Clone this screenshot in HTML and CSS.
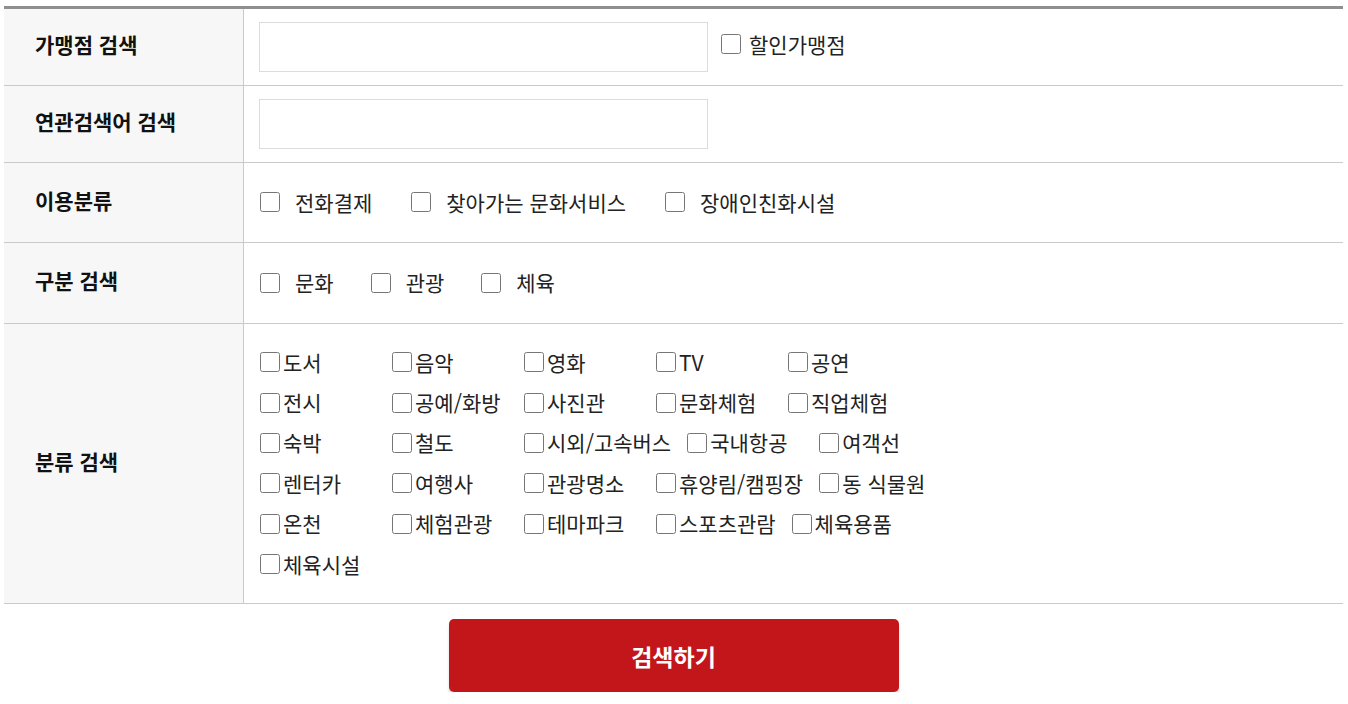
FILE: index.html
```html
<!DOCTYPE html>
<html lang="ko">
<head>
    <meta charset="UTF-8">
    <meta name="viewport" content="width=device-width, initial-scale=1.0">
    <title>가맹점 검색</title>
    <link rel="stylesheet" href="styles.css">
</head>
<body>

<div class="search-form">
    <div class="row">
        <div class="label">가맹점 검색</div>
        <div class="field field-input">
            <input type="text" class="text-input" />
            <label class="check check-inline"><input type="checkbox" />할인가맹점</label>
        </div>
    </div>
    <div class="row">
        <div class="label">연관검색어 검색</div>
        <div class="field field-input">
            <input type="text" class="text-input" />
        </div>
    </div>
    <div class="row">
        <div class="label">이용분류</div>
        <div class="field field-checks row-use">
            <label class="check"><input type="checkbox" />전화결제</label>
            <label class="check"><input type="checkbox" />찾아가는 문화서비스</label>
            <label class="check"><input type="checkbox" />장애인친화시설</label>
        </div>
    </div>
    <div class="row">
        <div class="label">구분 검색</div>
        <div class="field field-checks row-type">
            <label class="check"><input type="checkbox" />문화</label>
            <label class="check"><input type="checkbox" />관광</label>
            <label class="check"><input type="checkbox" />체육</label>
        </div>
    </div>
    <div class="row">
        <div class="label">분류 검색</div>
        <div class="field field-cats">
            <div class="cats">
                <label class="cat"><input type="checkbox" />도서</label>
                <label class="cat"><input type="checkbox" />음악</label>
                <label class="cat"><input type="checkbox" />영화</label>
                <label class="cat"><input type="checkbox" />TV</label>
                <label class="cat"><input type="checkbox" />공연</label>
                <label class="cat"><input type="checkbox" />전시</label>
                <label class="cat"><input type="checkbox" />공예/화방</label>
                <label class="cat"><input type="checkbox" />사진관</label>
                <label class="cat"><input type="checkbox" />문화체험</label>
                <label class="cat"><input type="checkbox" />직업체험</label>
                <label class="cat"><input type="checkbox" />숙박</label>
                <label class="cat"><input type="checkbox" />철도</label>
                <label class="cat"><input type="checkbox" />시외/고속버스</label>
                <label class="cat"><input type="checkbox" />국내항공</label>
                <label class="cat"><input type="checkbox" />여객선</label>
                <label class="cat"><input type="checkbox" />렌터카</label>
                <label class="cat"><input type="checkbox" />여행사</label>
                <label class="cat"><input type="checkbox" />관광명소</label>
                <label class="cat"><input type="checkbox" />휴양림/캠핑장</label>
                <label class="cat"><input type="checkbox" />동 식물원</label>
                <label class="cat"><input type="checkbox" />온천</label>
                <label class="cat"><input type="checkbox" />체험관광</label>
                <label class="cat"><input type="checkbox" />테마파크</label>
                <label class="cat"><input type="checkbox" />스포츠관람</label>
                <label class="cat"><input type="checkbox" />체육용품</label>
                <label class="cat"><input type="checkbox" />체육시설</label>
            </div>
        </div>
    </div>
</div>

<div class="buttons">
    <button class="search-btn">검색하기</button>
</div>

</body>
</html>
```

FILE: styles.css
```css
body {
    font-family: "Noto Sans CJK KR", "Noto Sans", sans-serif;
    margin: 6px 5px 0 4px;
    background-color: #fff;
    color: #222;
    font-size: 21px;
    line-height: 1.3;
}
.search-form {
    border-top: 3px solid #8f8f8f;
}
.row {
    display: grid;
    grid-template-columns: 240px 1fr;
    border-bottom: 1px solid #cacaca;
}
.label {
    background-color: #f7f7f7;
    border-right: 1px solid #cacaca;
    display: flex;
    align-items: center;
    padding: 0 0 4px 31px;
    font-weight: bold;
    color: #111;
}
.field {
    display: flex;
    align-items: center;
    padding: 0 15px;
}
.field-input {
    padding-top: 13px;
    padding-bottom: 13px;
}
.text-input {
    width: 449px;
    height: 50px;
    box-sizing: border-box;
    border: 1px solid #dcdcdc;
    margin: 0;
    font-size: 16px;
}
input[type="checkbox"] {
    width: 20px;
    height: 20px;
    margin: 0 3px 0 1px;
}
.check {
    display: flex;
    align-items: center;
    margin-right: 38px;
}
.check input[type="checkbox"] {
    margin-right: 15px;
}
.check-inline {
    margin-left: 12px;
    margin-top: -5px;
}
.check-inline input[type="checkbox"] {
    margin-right: 8px;
}
.row-use {
    height: 79px;
}
.row-type {
    height: 80px;
}
.row-type .check {
    margin-right: 36px;
}
.field-cats {
    padding-top: 18px;
    padding-bottom: 19px;
}
.cats {
    display: flex;
    flex-wrap: wrap;
    column-gap: 15px;
    max-width: 700px;
}
.cat {
    display: flex;
    align-items: center;
    min-width: 117px;
    height: 40.4px;
}
.buttons {
    display: flex;
    justify-content: center;
    margin-top: 15px;
}
.search-btn {
    width: 450px;
    height: 73px;
    border: none;
    border-radius: 5px;
    background-color: #c3161a;
    color: #fff;
    font-family: "Noto Sans CJK KR", sans-serif;
    font-size: 23px;
    font-weight: bold;
    box-shadow: 0 4px 3px #d6d6d6;
    cursor: pointer;
}
```
